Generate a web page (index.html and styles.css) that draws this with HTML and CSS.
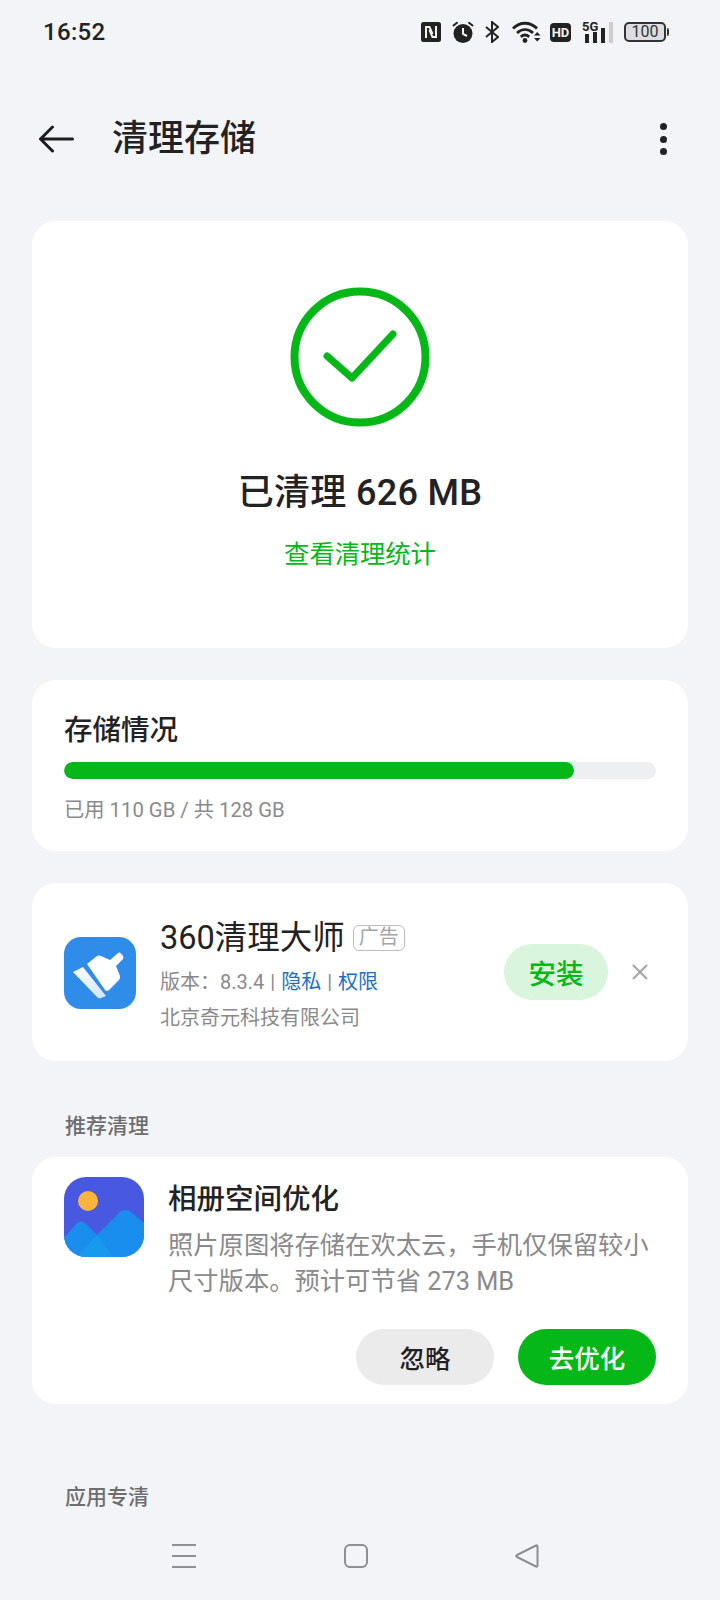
FILE: index.html
```html
<!DOCTYPE html>
<html lang="zh-CN">
<head>
<meta charset="utf-8">
<title>清理存储</title>
<link rel="stylesheet" href="styles.css">
</head>
<body>
<div class="page">
  <div class="status">
    <span class="time">16:52</span>
    <div class="status-icons">
      <svg class="i-nfc" width="20" height="20" viewBox="0 0 20 20"><rect width="20" height="20" rx="2.500" fill="#222"/><path d="M5 16V5h3.500l3 7M15 4v11h-3.500l-3-7" fill="none" stroke="#f2f4f7" stroke-width="2"/></svg>
      <svg class="i-alarm" width="22" height="22" viewBox="0 0 22 22"><circle cx="11" cy="12.500" r="9.500" fill="#222"/><path d="M11 7v6l4 2" fill="none" stroke="#f2f4f7" stroke-width="2"/><path d="M1.500 4.500 5 1.800M20.500 4.500 17 1.800" stroke="#222" stroke-width="2" fill="none" stroke-linecap="round"/></svg>
      <svg class="i-bt" width="14" height="22" viewBox="0 0 14 22"><path d="M1 6l12 10-6 5V1l6 5L1 16" fill="none" stroke="#222" stroke-width="2"/></svg>
      <svg class="i-wifi" width="29" height="23" viewBox="0 0 29 23"><path d="M1 7.500C8 .5 18 .5 25 7.500M5 12c5-4.500 11-4.500 16 0M8.800 15.800c3-2.500 5.400-2.500 8.400 0" fill="none" stroke="#222" stroke-width="2.800"/><circle cx="13" cy="19.500" r="2.400" fill="#222"/><path d="M22 14.500h6.500l-3.250-3.500zM22 17h6.500l-3.250 3.500z" fill="#222"/></svg>
      <span class="hd">HD</span>
      <div class="sig">
        <span class="sig-text">5G</span>
        <svg width="32" height="22" viewBox="0 0 32 22"><rect x="3" y="13" width="4" height="9" fill="#222"/><rect x="11" y="11" width="4" height="11" fill="#222"/><rect x="19" y="7" width="4" height="15" fill="#222"/><rect x="27" y="1" width="4" height="21" fill="#ccc"/></svg>
      </div>
      <div class="battery"><span class="cell">100</span><span class="tip"></span></div>
    </div>
  </div>

  <header class="topbar">
    <svg class="back" width="36" height="28" viewBox="0 0 36 28"><path d="M34.500 14H2.500M14.500 2 2.500 14 14.500 26" fill="none" stroke="#1d1d1f" stroke-width="3" stroke-linecap="round" stroke-linejoin="round"/></svg>
    <h1 class="title">清理存储</h1>
    <div class="more"><i></i><i></i><i></i></div>
  </header>

  <main class="content">
    <section class="card hero">
      <svg class="check" width="140" height="140" viewBox="0 0 140 140"><circle cx="70" cy="70" r="65.500" fill="none" stroke="#06b718" stroke-width="8"/><path d="M37 69 62 91 103 47" fill="none" stroke="#06b718" stroke-width="7" stroke-linecap="round" stroke-linejoin="round"/></svg>
      <div class="hero-title">已清理 626 MB</div>
      <a class="hero-link">查看清理统计</a>
    </section>

    <section class="card storage">
      <div class="storage-title">存储情况</div>
      <div class="bar"><div class="bar-fill" style="width:86.1%"></div></div>
      <div class="storage-meta">已用 110 GB / 共 128 GB</div>
    </section>

    <section class="card ad">
      <svg class="ad-icon" width="72" height="72" viewBox="0 0 72 72">
        <defs><linearGradient id="bristle" x1="0" y1="0" x2="1" y2="1"><stop offset="0" stop-color="#fff"/><stop offset="1" stop-color="#cfe4f8"/></linearGradient></defs>
        <rect width="72" height="72" rx="17" fill="#2f8ce9"/>
        <path d="M23 27 33 19Q35 18 37 19L46 23 54 16Q55.500 15 57 16.500L59 19Q60 20.500 59 22L52 29 56 39Q56.500 41 55 43L45 53Q43 55 41 53Z" fill="#fff"/>
        <path d="M9 35 19 30 42 59 37 61Q35 62 33 60Z" fill="url(#bristle)"/>
      </svg>
      <div class="ad-body">
        <div class="ad-head"><span class="ad-name">360清理大师</span><span class="ad-tag">广告</span></div>
        <div class="ad-line">版本：8.3.4<span class="sep">|</span><a class="link">隐私</a><span class="sep">|</span><a class="link">权限</a></div>
        <div class="ad-line ad-company">北京奇元科技有限公司</div>
      </div>
      <button class="install">安装</button>
      <svg class="close" width="18" height="18" viewBox="0 0 18 18"><path d="M2 2 16 16M16 2 2 16" stroke="#a8a8a8" stroke-width="2.200" fill="none"/></svg>
    </section>

    <h2 class="section-label first">推荐清理</h2>

    <section class="card rec">
      <div class="rec-main">
        <svg class="rec-icon" width="80" height="80" viewBox="0 0 80 80">
          <defs><clipPath id="sq"><rect width="80" height="80" rx="22"/></clipPath></defs>
          <g clip-path="url(#sq)">
            <rect width="80" height="80" fill="#4858e0"/>
            <circle cx="24" cy="24" r="10" fill="#fbb53c"/>
            <path d="M0 61 13 46Q17 43 21 46L33 58 56 35Q62 31 67 35L80 46V80H0Z" fill="#1a8eed"/>
            <path d="M13 80 33 58 49 80Z" fill="#159aee"/>
          </g>
        </svg>
        <div class="rec-text">
          <div class="rec-title">相册空间优化</div>
          <p class="rec-desc">照片原图将存储在欢太云，手机仅保留较小尺寸版本。预计可节省 273 MB</p>
        </div>
      </div>
      <div class="rec-actions">
        <button class="btn btn-ghost">忽略</button>
        <button class="btn btn-primary">去优化</button>
      </div>
    </section>

    <h2 class="section-label second">应用专清</h2>
  </main>

  <nav class="navbar">
    <svg width="24" height="24" viewBox="0 0 24 24"><path d="M0 1h24M0 12h24M0 23h24" stroke="#8e8f92" stroke-width="2"/></svg>
    <svg width="24" height="24" viewBox="0 0 24 24"><rect x="1" y="1" width="22" height="22" rx="5" fill="none" stroke="#8e8f92" stroke-width="2"/></svg>
    <svg width="24" height="24" viewBox="0 0 24 24"><path d="M22.500 2.500V21.500Q22.500 23 21 22.500L2 13Q.5 12 2 11L21 1.500Q22.500 1 22.500 2.500Z" fill="none" stroke="#8e8f92" stroke-width="2" stroke-linejoin="round"/></svg>
  </nav>
</div>
</body>
</html>
```

FILE: styles.css
```css
* { box-sizing: border-box; }
html, body { margin: 0; padding: 0; }
body {
  font-family: "Roboto", "Noto Sans CJK SC", sans-serif;
  background: #f2f4f7;
  color: #222224;
}
.page {
  width: 720px;
  height: 1600px;
  display: flex;
  flex-direction: column;
  overflow: hidden;
}
.status {
  height: 64px;
  padding: 0 51px 0 43px;
  display: flex;
  align-items: center;
  justify-content: space-between;
}
.time { font-size: 24px; font-weight: 500; color: #222; letter-spacing: .3px; }
.status-icons { display: flex; align-items: center; }
.status-icons > * { flex: none; }
.i-nfc { margin-right: 11px; }
.i-alarm { margin-right: 11px; }
.i-bt { margin-right: 13px; }
.i-wifi { margin-right: 9px; }
.hd {
  width: 21px; height: 19px;
  margin-right: 11px;
  background: #222; color: #f2f4f7;
  border-radius: 4px;
  font-size: 13px; font-weight: 700; line-height: 19px;
  text-align: center;
}
.sig { position: relative; width: 32px; height: 22px; margin-right: 10px; }
.sig svg { display: block; }
.sig-text {
  position: absolute; left: 0; top: -1px;
  font-size: 13px; line-height: 13px; font-weight: 700; color: #222;
}
.battery { display: flex; align-items: center; gap: 1px; }
.cell {
  width: 42px; height: 20px;
  border: 2px solid #333; border-radius: 5px;
  background: #dcdde0;
  font-size: 16px; line-height: 16px;
  text-align: center; color: #333;
}
.tip { width: 2px; height: 8px; background: #333; border-radius: 0 2px 2px 0; }

.topbar {
  height: 92px;
  margin-top: 29px;
  padding: 0 53px 0 38px;
  display: flex;
  align-items: center;
}
.back { flex: none; }
.title { margin: 0 0 0 38px; flex: 1; font-size: 36px; font-weight: 500; line-height: 48px; color: #222224; }
.more { display: flex; flex-direction: column; gap: 5.300px; }
.more i { display: block; width: 7px; height: 7px; border-radius: 50%; background: #222224; }

.content { padding: 36px 32px 0; }
.card { background: #fff; border-radius: 24px; }
.hero {
  height: 427px;
  padding-top: 66px;
  display: flex; flex-direction: column; align-items: center;
}
.check { display: block; }
.hero-title { margin-top: 41px; font-size: 36px; line-height: 50px; font-weight: 500; letter-spacing: .3px; }
.hero-link { margin-top: 19px; font-size: 25.300px; line-height: 36px; color: #06b718; }

.storage { margin-top: 32px; height: 171px; padding: 32px 32px 0; }
.storage-title { font-size: 28.500px; line-height: 38px; font-weight: 500; }
.bar { margin-top: 12px; height: 17px; border-radius: 9px; background: #eeeff1; overflow: hidden; }
.bar-fill { height: 100%; border-radius: 9px; background: #06b718; }
.storage-meta { margin-top: 16px; font-size: 20.300px; line-height: 30px; color: #8a8a8c; }

.ad {
  margin-top: 32px; height: 178px; padding: 4px 32px 0;
  display: flex; align-items: center;
}
.ad-icon { flex: none; margin-top: -3px; }
.ad-body { margin-left: 24px; flex: 1; min-width: 0; }
.ad-head { display: flex; align-items: center; height: 44px; }
.ad-name { font-size: 32.500px; line-height: 44px; font-weight: 400; white-space: nowrap; }
.ad-tag {
  margin-left: 8px; width: 52px; height: 26px;
  border: 1.500px solid #bcbcbc; border-radius: 6px;
  color: #a5a5a5; font-size: 20px; line-height: 22px; text-align: center;
}
.ad-line { margin-top: 8px; font-size: 20px; line-height: 28px; color: #8a8a8c; white-space: nowrap; }
.ad-company { margin-top: 8px; }
.sep { margin: 0 6px; }
.link { color: #1c6fc9; }
.install {
  flex: none; width: 104px; height: 56px; margin: -4px 0 0 1px;
  border: 0; border-radius: 28px;
  background: #d9f5dd; color: #06b718;
  font: 500 27.500px/56px "Noto Sans CJK SC", sans-serif;
  padding: 0;
}
.close { flex: none; margin: -4px 7px 0 23px; }

.section-label { margin: 0; font-size: 21px; line-height: 30px; font-weight: 500; color: #6e6e70; padding-left: 33px; }
.section-label.first { margin-top: 50px; }
.section-label.second { margin-top: 78px; }

.rec { margin-top: 16px; height: 247px; padding: 20px 32px 0; }
.rec-main { display: flex; }
.rec-icon { flex: none; }
.rec-text { margin-left: 24px; flex: 1; min-width: 0; padding-top: 3px; }
.rec-title { font-size: 28.500px; line-height: 40px; font-weight: 500; }
.rec-desc { margin: 8px 0 0; font-size: 25.300px; line-height: 36px; color: #8a8a8c; }
.rec-actions { margin-top: 29px; display: flex; justify-content: flex-end; gap: 24px; }
.btn {
  width: 138px; height: 56px; padding: 0;
  border: 0; border-radius: 28px;
  font: 500 25.500px/56px "Noto Sans CJK SC", sans-serif;
}
.btn-ghost { background: #ebebeb; color: #222224; }
.btn-primary { background: #06b718; color: #fff; }

.navbar {
  margin-top: auto;
  height: 66px;
  padding: 0 181px 23px 172px;
  display: flex; align-items: center; justify-content: space-between;
}
```
